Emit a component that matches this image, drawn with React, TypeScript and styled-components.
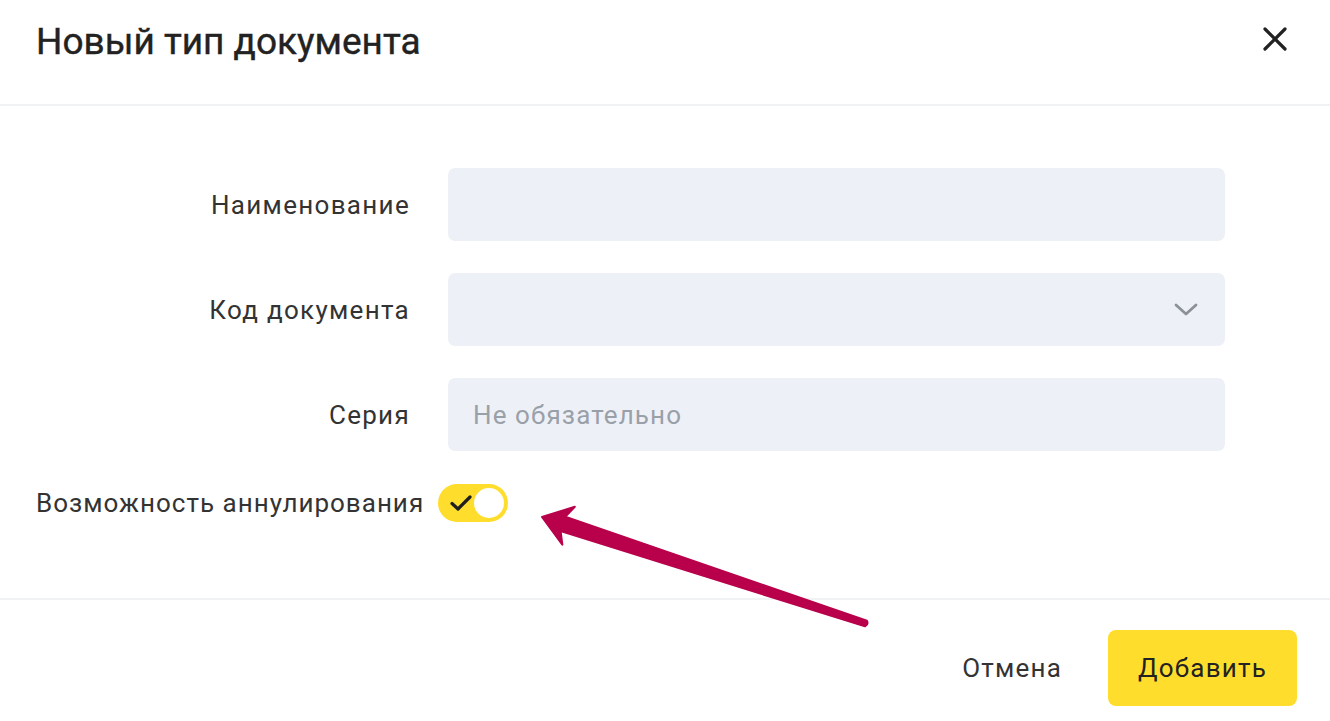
import React from "react";
import styled, { createGlobalStyle } from "styled-components";

const Global = createGlobalStyle`
  html, body { margin: 0; padding: 0; background: #ffffff; overflow: hidden; }
  body { font-family: Roboto, "Noto Sans", sans-serif; color: #333333; }
  * { box-sizing: border-box; }
`;

const Page = styled.div`
  position: relative;
  width: 1330px;
  height: 721px;
  background: #ffffff;
  display: flex;
  flex-direction: column;
`;

const Header = styled.header`
  height: 106px;
  padding: 16px 36px 0 36px;
  border-bottom: 2px solid #f1f2f4;
  display: flex;
  align-items: flex-start;
  justify-content: space-between;
`;

const Title = styled.h1`
  margin: 0;
  font-family: Roboto, sans-serif;
  font-weight: 400;
  font-size: 37px;
  line-height: 52px;
  color: #222222;
  letter-spacing: 0px;
  -webkit-text-stroke: 0.4px #222222;
`;

const CloseButton = styled.button`
  border: 0;
  background: transparent;
  padding: 0;
  margin: 10px 6px 0 0;
  width: 26px;
  height: 26px;
  display: flex;
  align-items: center;
  justify-content: center;
  color: #222222;
  cursor: pointer;
`;

const Body = styled.main`
  padding: 62px 105px 0 36px;
  display: flex;
  flex-direction: column;
`;

const Fields = styled.div`
  display: grid;
  grid-template-columns: 374px 1fr;
  column-gap: 38px;
  row-gap: 32px;
  align-items: center;
`;

const Label = styled.label`
  font-size: 26px;
  line-height: 30px;
  letter-spacing: 1.3px;
  text-align: right;
  color: #333333;
`;

const InputBox = styled.div`
  position: relative;
  height: 73px;
  border-radius: 7px;
  background: #edf1f7;
  display: flex;
  align-items: center;
  padding: 0 25px;
`;

const Input = styled.input`
  border: 0;
  outline: none;
  background: transparent;
  width: 100%;
  font-family: Roboto, sans-serif;
  font-size: 26px;
  letter-spacing: 1.1px;
  color: #333333;
  padding: 0;
  &::placeholder { color: #9aa0a8; }
`;

const Chevron = styled.span`
  position: absolute;
  right: 27px;
  top: 50%;
  transform: translateY(-50%);
  display: flex;
  color: #8c9199;
`;

const ToggleRow = styled.div`
  margin-top: 33px;
  display: flex;
  align-items: center;
  gap: 14px;
`;

const ToggleLabel = styled.span`
  font-size: 26px;
  line-height: 30px;
  letter-spacing: 1px;
  color: #333333;
`;

const Toggle = styled.div`
  width: 70px;
  height: 38px;
  border-radius: 19px;
  background: #ffdd2d;
  display: flex;
  align-items: center;
  justify-content: space-between;
  padding: 0 4px 0 12px;
`;

const Knob = styled.span`
  width: 30px;
  height: 30px;
  border-radius: 50%;
  background: #ffffff;
`;

const Footer = styled.footer`
  margin-top: 76px;
  border-top: 2px solid #f1f2f4;
  padding: 30px 33px 0 0;
  display: flex;
  justify-content: flex-end;
  align-items: center;
  gap: 24px;
`;

const Button = styled.button<{ $primary?: boolean }>`
  height: 76px;
  border: 0;
  border-radius: 8px;
  font-family: Roboto, sans-serif;
  font-size: 26px;
  letter-spacing: 1.2px;
  color: ${(p) => (p.$primary ? "#222222" : "#333333")};
  background: ${(p) => (p.$primary ? "#ffdd2d" : "transparent")};
  cursor: pointer;
  padding: ${(p) => (p.$primary ? "0 30px" : "0 22px")};
`;

const Annotation = styled.svg`
  position: absolute;
  left: 0;
  top: 0;
  pointer-events: none;
`;

export default function App() {
  return (
    <>
      <Global />
      <Page>
        <Header>
          <Title>Новый тип документа</Title>
          <CloseButton aria-label="Закрыть">
            <svg width="26" height="26" viewBox="0 0 26 26">
              <path d="M3 3 L23 23 M23 3 L3 23" stroke="currentColor" strokeWidth="3.2" strokeLinecap="round" />
            </svg>
          </CloseButton>
        </Header>
        <Body>
          <Fields>
            <Label>Наименование</Label>
            <InputBox>
              <Input />
            </InputBox>
            <Label>Код документа</Label>
            <InputBox>
              <Input readOnly />
              <Chevron>
                <svg width="24" height="14" viewBox="0 0 24 14">
                  <path d="M2 2 L12 11 L22 2" fill="none" stroke="currentColor" strokeWidth="2.8" strokeLinecap="round" strokeLinejoin="round" />
                </svg>
              </Chevron>
            </InputBox>
            <Label>Серия</Label>
            <InputBox>
              <Input placeholder="Не обязательно" />
            </InputBox>
          </Fields>
          <ToggleRow>
            <ToggleLabel>Возможность аннулирования</ToggleLabel>
            <Toggle>
              <svg width="22" height="18" viewBox="0 0 22 18">
                <path d="M2 9.5 L8 15 L20 3" fill="none" stroke="#1e1e1e" strokeWidth="3.2" strokeLinecap="round" strokeLinejoin="round" />
              </svg>
              <Knob />
            </Toggle>
          </ToggleRow>
        </Body>
        <Footer>
          <Button>Отмена</Button>
          <Button $primary>Добавить</Button>
        </Footer>
        <Annotation width="1330" height="721" viewBox="0 0 1330 721">
          <g transform="translate(542 517) rotate(18.2)">
            <path
              d="M0 0 L28 -20 L22 -7.5 L341 -3 Q344 0 341 3 L22 7.5 L28 20 Z"
              fill="#b8004b"
              stroke="#b8004b"
              strokeWidth="2"
              strokeLinejoin="round"
            />
          </g>
        </Annotation>
      </Page>
    </>
  );
}
